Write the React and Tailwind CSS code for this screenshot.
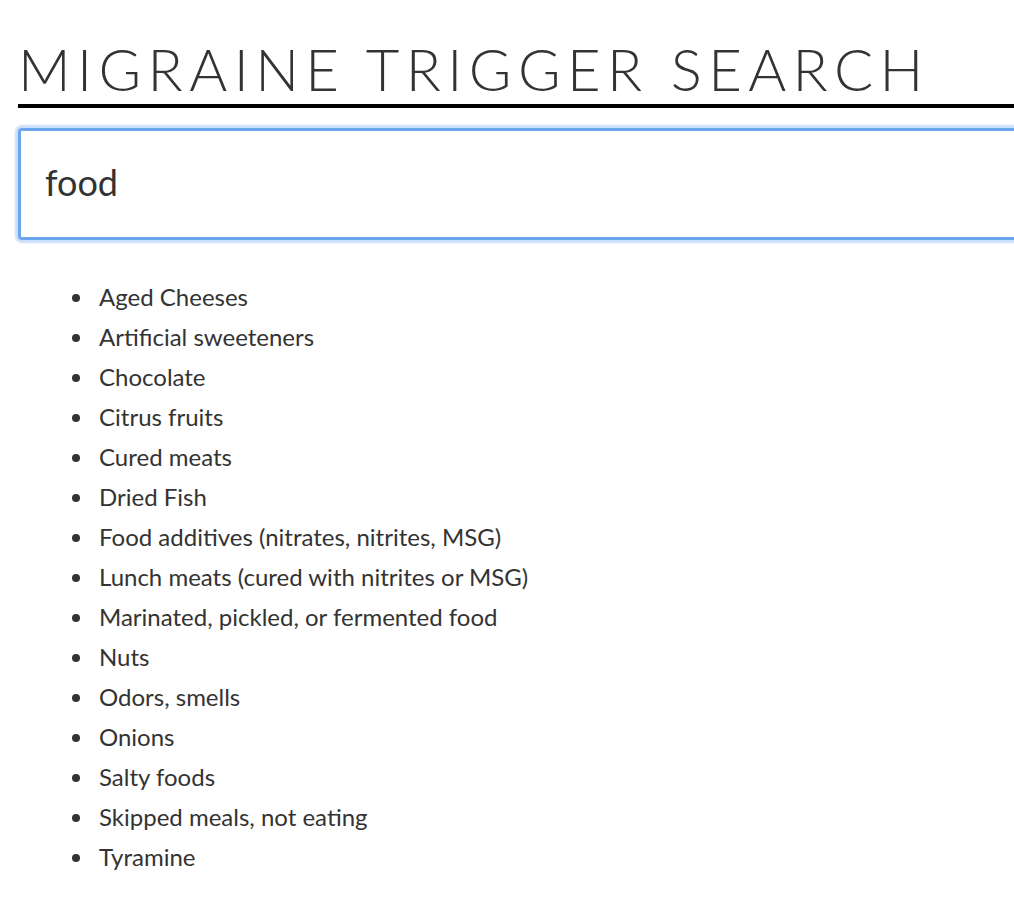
import React, { useState } from "react";

const triggers = [
  "Aged Cheeses",
  "Artificial sweeteners",
  "Chocolate",
  "Citrus fruits",
  "Cured meats",
  "Dried Fish",
  "Food additives (nitrates, nitrites, MSG)",
  "Lunch meats (cured with nitrites or MSG)",
  "Marinated, pickled, or fermented food",
  "Nuts",
  "Odors, smells",
  "Onions",
  "Salty foods",
  "Skipped meals, not eating",
  "Tyramine",
];

const App = () => {
  const [query, setQuery] = useState("food");

  return (
    <div className="min-h-screen overflow-hidden bg-white font-['Lato',sans-serif] text-[#333]">
      <div className="w-[1100px] pl-[18px] pt-[37px]">
        <h1 className="border-b-4 border-black pb-[4px] text-[58px] font-light leading-[63px] tracking-[6.4px] text-[#333]">
          MIGRAINE TRIGGER SEARCH
        </h1>
        <div className="mt-[20px] rounded-[4px] border-[3px] border-[#6aa6f0] shadow-[0_0_2px_3px_#c8defa]">
          <input
            value={query}
            onChange={(e) => setQuery(e.target.value)}
            className="h-[106px] w-full bg-white px-[24px] pb-[4px] text-[36px] text-[#333] outline-none"
          />
        </div>
        <ul className="mt-[37px] list-disc pl-[77px] marker:text-[#333]">
          {triggers.map((t) => (
            <li key={t} className="h-[40px] pl-[4px] text-[24px] leading-[40px]">
              {t}
            </li>
          ))}
        </ul>
      </div>
    </div>
  );
};

export default App;
